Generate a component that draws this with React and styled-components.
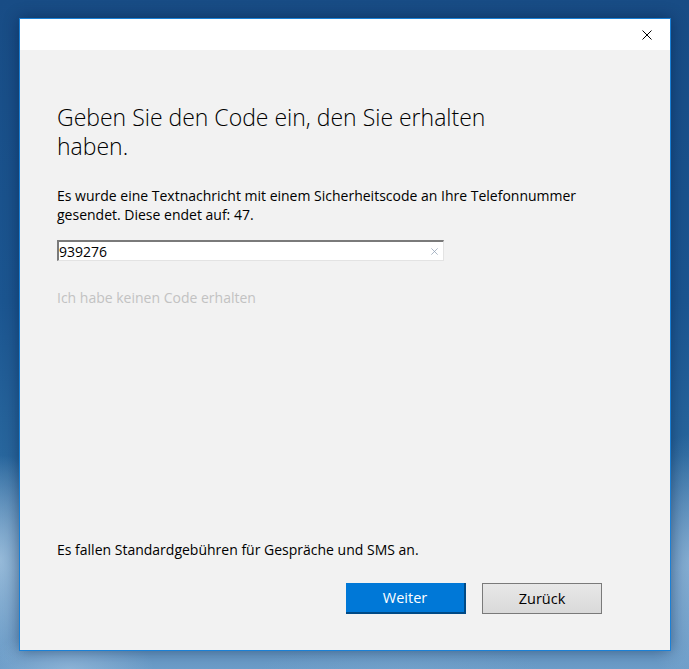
import React, { useState } from 'react'
import styled, { createGlobalStyle } from 'styled-components'

const GlobalStyle = createGlobalStyle`
  html, body {
    margin: 0;
    padding: 0;
    width: 689px;
    height: 669px;
    overflow: hidden;
  }
  body {
    font-family: 'Open Sans', 'Noto Sans', 'Liberation Sans', sans-serif;
  }
`

const Desktop = styled.div`
  width: 689px;
  height: 669px;
  box-sizing: border-box;
  padding: 18px 0 0 19px;
  background:
    radial-gradient(ellipse 90px 150px at 0px 560px, rgba(190, 215, 235, 0.6), transparent 70%),
    radial-gradient(ellipse 120px 60px at 70px 669px, rgba(170, 200, 228, 0.5), transparent 70%),
    radial-gradient(ellipse 80px 180px at 689px 560px, rgba(180, 208, 232, 0.45), transparent 70%),
    radial-gradient(ellipse 200px 40px at 400px 669px, rgba(120, 165, 205, 0.5), transparent 70%),
    linear-gradient(to bottom, #184c85 0%, #1b5590 45%, #28669d 68%, #5d90bf 85%, #6b9cc8 100%);
`

const Window = styled.div`
  width: 652px;
  height: 633px;
  box-sizing: border-box;
  border: 1px solid #1a80d6;
  background: #f2f2f2;
  display: flex;
  flex-direction: column;
  box-shadow: 0 0 14px rgba(0, 20, 50, 0.45);
`

const TitleBar = styled.div`
  height: 31px;
  background: #ffffff;
  display: flex;
  justify-content: flex-end;
  align-items: stretch;
`

const CloseButton = styled.button`
  width: 46px;
  border: none;
  background: transparent;
  padding: 0;
  display: flex;
  align-items: center;
  justify-content: center;
  cursor: default;
  &:hover {
    background: #e81123;
  }
  &:hover svg path {
    stroke: #fff;
  }
`

const Content = styled.div`
  flex: 1;
  display: flex;
  flex-direction: column;
  padding: 53px 68px 36px 37px;
  color: #000;
`

const Heading = styled.h1`
  margin: 0;
  max-width: 450px;
  font-family: 'Open Sans', 'Noto Sans', sans-serif;
  font-weight: 300;
  font-size: 23px;
  line-height: 29px;
  color: #000;
`

const Paragraph = styled.p`
  margin: ${(p) => p.$top || 0}px 0 0 0;
  font-size: 14px;
  line-height: 19px;
  color: ${(p) => (p.$muted ? '#c2c2c2' : '#000')};
`

const Field = styled.div`
  margin-top: 16px;
  width: 387px;
  height: 21px;
  box-sizing: border-box;
  background: #fff;
  border-style: solid;
  border-width: 2px 1px 1px 2px;
  border-color: #7a7a7a #e3e3e3 #e3e3e3 #7a7a7a;
  display: flex;
  align-items: center;
`

const Input = styled.input`
  flex: 1;
  min-width: 0;
  border: none;
  outline: none;
  background: transparent;
  padding: 0;
  font-family: 'Open Sans', 'Noto Sans', sans-serif;
  font-size: 14px;
  color: #000;
  caret-color: #000;
`

const ClearButton = styled.button`
  width: 18px;
  height: 100%;
  border: none;
  background: transparent;
  padding: 0;
  display: flex;
  align-items: center;
  justify-content: center;
`

const Spacer = styled.div`
  flex: 1;
`

const ButtonRow = styled.div`
  margin-top: 24px;
  display: flex;
  justify-content: flex-end;
  gap: 16px;
`

const DialogButton = styled.button`
  width: 120px;
  height: 31px;
  box-sizing: border-box;
  font-family: 'Open Sans', 'Noto Sans', sans-serif;
  font-size: 14.5px;
  padding: 0;
  cursor: default;
  ${(p) =>
    p.$primary
      ? `
    background: #0078d7;
    color: #fff;
    border: none;
    border-right: 2px solid #004a86;
    border-bottom: 2px solid #004a86;
  `
      : `
    background: linear-gradient(to bottom, #e8e8e8, #d9d9d9);
    color: #000;
    border: 1px solid #7a7a7a;
  `}
`

const CloseIcon = ({ size = 10, color = '#000' }) => (
  <svg width={size} height={size} viewBox="0 0 10 10">
    <path d="M0.5 0.5 L9.5 9.5 M9.5 0.5 L0.5 9.5" stroke={color} strokeWidth="1" fill="none" />
  </svg>
)

export default function App() {
  const [code, setCode] = useState('939276')

  return (
    <Desktop>
      <GlobalStyle />
      <Window>
        <TitleBar>
          <CloseButton aria-label="Schließen">
            <CloseIcon />
          </CloseButton>
        </TitleBar>
        <Content>
          <Heading>Geben Sie den Code ein, den Sie erhalten haben.</Heading>
          <Paragraph $top={25}>
            Es wurde eine Textnachricht mit einem Sicherheitscode an Ihre Telefonnummer gesendet. Diese endet auf: 47.
          </Paragraph>
          <Field>
            <Input value={code} onChange={(e) => setCode(e.target.value)} autoFocus />
            <ClearButton aria-label="Löschen" onClick={() => setCode('')}>
              <CloseIcon size={7} color="#8a9bb0" />
            </ClearButton>
          </Field>
          <Paragraph $top={27} $muted>Ich habe keinen Code erhalten</Paragraph>
          <Spacer />
          <Paragraph>Es fallen Standardgebühren für Gespräche und SMS an.</Paragraph>
          <ButtonRow>
            <DialogButton $primary>Weiter</DialogButton>
            <DialogButton>Zurück</DialogButton>
          </ButtonRow>
        </Content>
      </Window>
    </Desktop>
  )
}
